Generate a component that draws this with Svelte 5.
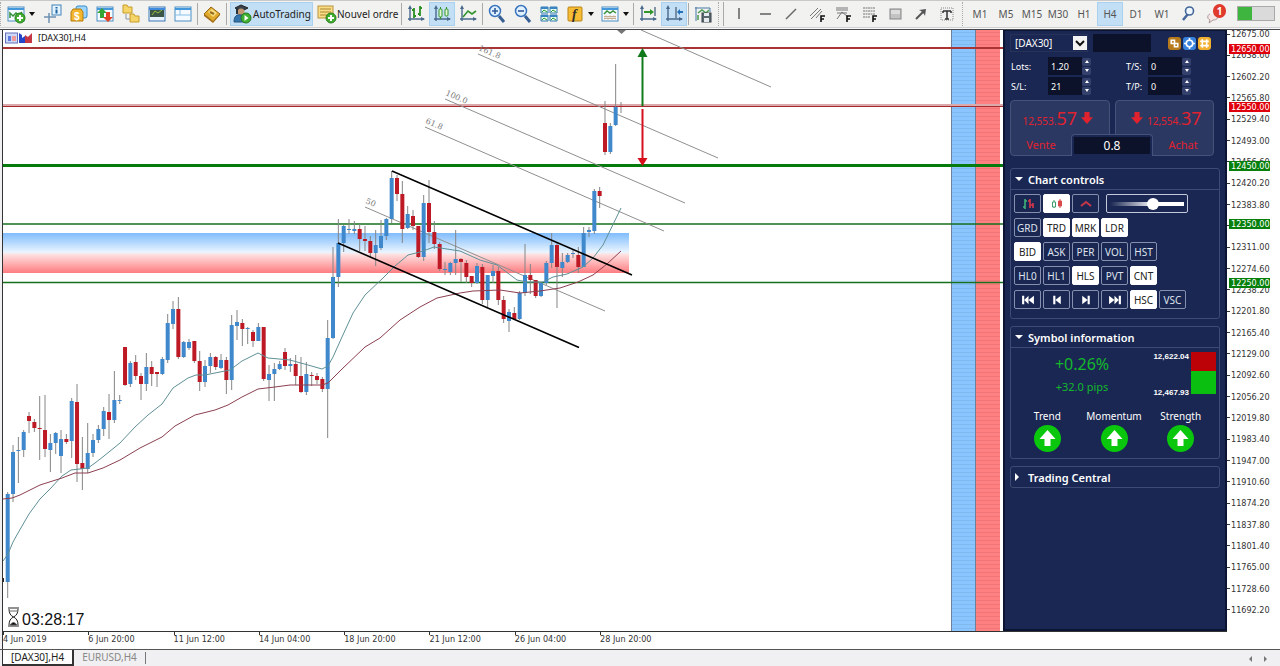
<script>
    let symbol = $state('[DAX30]')
    let lots = $state('1.20')
    let stopLoss = $state('21')
    let trailing = $state('0')
    let takeProfit = $state('0')
    let zoomLevel = $state(60)
    let timeframe = $state('H4')

    // x of the first candle and the distance between two candles
    const firstX = 7.7
    const stepX = 5.333

    // high, body top, body bottom, low, 1 = rising
    const candles = [
        [492,494,582,598,1],[445,452,494,502,1],[437,450,451,483,1],[430,432,450,457,1],[412,416,421,433,0],[419,422,428,432,0],
        [396,428,429,460,0],[395,430,449,457,0],[434,443,450,472,1],[432,433,443,454,1],[430,439,456,473,1],[434,439,442,444,0],
        [398,401,441,458,1],[384,402,464,482,0],[437,463,469,490,0],[423,453,469,473,1],[434,440,453,457,1],[425,429,440,443,1],
        [407,411,429,436,1],[394,412,420,439,0],[371,400,420,423,1],[395,400,401,404,1],[347,347,385,386,0],[361,363,384,387,1],
        [355,362,376,380,0],[373,376,384,400,0],[353,367,384,391,1],[361,367,374,386,0],[372,372,374,387,0],[357,359,374,375,1],
        [314,323,360,363,1],[301,309,324,329,1],[297,309,357,359,0],[341,342,357,358,1],[339,342,348,350,1],[341,341,361,363,0],
        [351,361,382,391,0],[360,366,382,387,1],[353,357,366,373,1],[356,357,367,370,0],[354,360,368,369,1],[357,360,380,394,0],
        [315,325,380,390,1],[310,322,326,340,1],[319,323,329,346,0],[327,328,329,344,1],[330,332,341,347,0],[323,327,341,341,1],
        [327,327,379,381,0],[365,374,380,401,1],[363,369,374,401,1],[361,364,369,370,1],[348,352,366,370,0],[358,364,366,372,1],
        [355,364,376,385,0],[357,376,392,393,0],[362,374,392,395,1],[372,375,376,386,0],[373,376,380,384,0],[377,379,389,392,0],
        [320,338,389,438,1],[247,277,338,339,1],[219,243,277,287,1],[225,226,243,252,1],[219,229,230,234,1],[221,229,231,234,1],
        [224,229,239,251,0],[226,239,241,251,0],[236,241,253,257,0],[230,245,253,266,1],[220,236,248,250,1],[218,219,236,240,1],
        [171,178,219,223,1],[175,178,194,201,0],[181,194,229,243,0],[206,214,228,229,1],[210,216,226,230,0],[226,226,257,258,0],
        [195,203,257,261,1],[180,203,232,243,0],[221,232,244,249,0],[242,244,269,271,0],[262,269,270,275,1],[262,263,272,275,1],
        [230,259,263,275,1],[258,259,262,282,0],[260,263,277,283,0],[276,276,283,287,0],[263,266,283,284,1],[264,267,300,304,0],
        [275,275,300,307,1],[265,271,276,283,1],[267,271,300,305,0],[296,300,319,323,0],[309,312,321,332,1],[307,313,319,320,0],
        [291,293,319,320,1],[244,275,293,296,1],[264,275,280,294,0],[280,280,296,298,0],[282,283,296,297,1],[261,263,283,285,1],
        [233,245,263,268,1],[243,245,267,308,0],[253,262,268,277,1],[253,255,262,263,1],[249,253,254,258,1],[247,255,267,273,0],
        [227,233,267,267,1],[227,230,232,237,1],[189,191,231,234,1],[187,191,196,208,0],[101,123,152,155,0],[123,126,152,154,1],
        [64,107,125,126,1],[102,106,107,113,0]
    ]

    const fastAverage = '3,561 8,554 13,542 18,533 29,514 40,499 50,489 62,476 71,470 88,468 95,463 104,456 120,443 135,427 148,415 162,404 173,388 188,378 196,375 205,375 215,373 230,370 242,361 258,353 268,358 290,360 308,365 322,369 328,366 333,357 342,337 353,313 365,295 383,278 395,266 408,255 420,252 434,247 460,251 480,260 497,265 517,280 527,282 543,282 553,277 567,274 583,267 593,258 603,245 621,208'
    const slowAverage = '3,499 12,498 20,495 40,485 62,478 75,473 88,473 103,468 120,460 140,448 162,437 175,426 195,415 215,410 228,405 242,397 258,389 275,387 290,385 322,385 328,383 342,369 365,347 380,338 400,320 420,307 437,298 460,293 473,291 500,290 520,293 540,291 560,288 578,282 593,275 607,264 621,251'

    const levels = [
        { y: 48, color: '#a93434', width: 2 },
        { y: 105, color: '#dba9ab', width: 2 },
        { y: 106.5, color: '#a32d31', width: 1 },
        { y: 165.5, color: '#057a0d', width: 3 },
        { y: 224, color: '#16701c', width: 1.5 },
        { y: 282.5, color: '#16701c', width: 1.5 }
    ]

    const fibs = [
        { x1: 641, y1: 30, x2: 771, y2: 87 },
        { x1: 478, y1: 54, x2: 718, y2: 158, label: '161.8' },
        { x1: 445, y1: 99, x2: 685, y2: 203, label: '100.0' },
        { x1: 425, y1: 127, x2: 664, y2: 231, label: '61.8' },
        { x1: 365, y1: 207, x2: 605, y2: 311, label: '50' }
    ]

    const topPrice = 12675
    const priceStep = 36.4
    const ticks = Array.from({ length: 28 }, (_, i) => (topPrice - i * priceStep).toFixed(2))
    const tags = [
        { price: 12650, color: '#e0000c' },
        { price: 12550, color: '#e0000c' },
        { price: 12450, color: '#06800b' },
        { price: 12350, color: '#06800b' },
        { price: 12250, color: '#06800b' }
    ]
    const tagTop = (price) => ((topPrice - price) / (priceStep * 27)) * 100

    const dates = ['4 Jun 2019', '6 Jun 20:00', '11 Jun 12:00', '14 Jun 04:00', '18 Jun 20:00', '21 Jun 12:00', '26 Jun 04:00', '28 Jun 20:00']
    const timeframes = ['M1', 'M5', 'M15', 'M30', 'H1', 'H4', 'D1', 'W1']

    let toggles = $state([
        [['GRD', false], ['TRD', true], ['MRK', true], ['LDR', true]],
        [['BID', true], ['ASK', false], ['PER', false], ['VOL', false], ['HST', false]],
        [['HL0', false], ['HL1', false], ['HLS', true], ['PVT', false], ['CNT', true]]
    ])
    let scroll = $state([['HSC', true], ['VSC', false]])

    const steppers = [
        { title: 'First', d: 'M1 1h2v8h-2zM7 1v8l-4-4zM12 1v8l-5-4z' },
        { title: 'Back', d: 'M3 1h2v8h-2zM10 1v8l-5-4z' },
        { title: 'Forward', d: 'M8 1h2v8h-2zM3 1v8l5-4z' },
        { title: 'Last', d: 'M10 1h2v8h-2zM1 1v8l5-4zM6 1v8l4-4z' }
    ]

    const axes = '<path d="M4 3v14M2 15h16" stroke="#49698c" stroke-width="1.4"/><path d="M4 1l-2 4h4zM19 15l-4-2v4z" fill="#49698c"/>'
    const plus = '<circle cx="14" cy="14" r="5" fill="#43ad31" stroke="#26801c"/><path d="M14 11v6M11 14h6" stroke="#fff" stroke-width="2"/>'
    const win = '<rect x="2" y="3" width="16" height="14" fill="#f4faff" stroke="#4c8fc4"/><path d="M2 4h16v2H2z" fill="#4597dc"/>'

    const icons = {
        newChart: win + '<path d="M4 14V9l3 3 3-3 3 2 3-3" stroke="#36923b" stroke-width="1.5"/>' + plus,
        crosshair: '<path d="M6 9v10M1 13h12" stroke="#6f91b3" stroke-width="1.5"/><rect x="9" y="1" width="9" height="10" fill="#e3f3ff" stroke="#4583b6"/><path d="M13.5 3v1.5M13.5 5.5v4" stroke="#1e649f" stroke-width="2"/>',
        market: '<rect x="7" y="2" width="11" height="12" rx="2" fill="#9cd6ff" stroke="#368ac8"/><path d="M2 8l2-3h8l2 3v9H2z" fill="#f3b62c" stroke="#b57b0c"/><text x="5" y="16" font-size="10" font-weight="700" fill="#fff" font-family="Liberation Sans, sans-serif">$</text>',
        arrows: win + '<path d="M7 4l5 5H9v5H5V9H2z" fill="#33a635"/><path d="M13 18l5-5h-3V8h-4v5H8z" fill="#e34324"/>',
        folders: '<path d="M2 1h4l1 2h4v6H2zM9 10h4l1 2h4v6H9z" fill="#f6d568" stroke="#c69c2b"/><path d="M5 10v5h4" stroke="#8a95a5"/>',
        terminal: '<rect x="2" y="3" width="16" height="14" fill="#e7f2fd" stroke="#3e79b3"/><path d="M2 4h16v2H2z" fill="#3f8ade"/><path d="M3 6h14v7H3z" fill="#3c5648"/><path d="M5 11l3-4 3 2 4-3" stroke="#98be39"/>',
        tester: win + '<path d="M2 11h16M7 6v5" stroke="#88bfe5"/>',
        editor: '<path d="M2 10l7-7 9 7-7 8z" fill="#e0ab2d" stroke="#956516"/><path d="M2 10v2l9 7 7-8v-1l-7 7z" fill="#a6701a"/><path d="M6 8l4-3 5 4-4 4z" fill="#f7dd83"/><path d="M8 8l4 2" stroke="#966a1b" stroke-width="2"/>',
        robot: '<path d="M3 4l6-3 7 3-6 3z" fill="#39424e" stroke="#222"/><circle cx="9" cy="8" r="3.5" fill="#c49972"/><path d="M2 18c0-6 3-8 7-7 4 0 6 3 6 7z" fill="#3575ad" stroke="#23557e"/><path d="M5 4v6" stroke="#28323d" stroke-width="2"/><circle cx="14" cy="14" r="5" fill="#40af32" stroke="#247a1e"/><path d="M12.5 11l4 3-4 3z" fill="#fff"/>',
        order: '<rect x="1" y="2" width="15" height="12" fill="#f9de87" stroke="#b8933c"/><path d="M3 5h11M3 8h11M3 11h8" stroke="#af8633"/>' + plus,
        bars: axes + '<path d="M8 4v10M8 6H6M8 12h2M14 2v10M14 4h2M14 10h-2" stroke="#299022" stroke-width="1.8"/>',
        candle: axes + '<rect x="7" y="5" width="3" height="8" rx="1" fill="#e5f7d5" stroke="#31952c"/><rect x="13" y="5" width="3" height="7" rx="1" fill="#e5f7d5" stroke="#31952c"/><path d="M8.5 3v2M14.5 3v2M8.5 13v2" stroke="#31952c"/>',
        line: axes + '<path d="M5 13l5-6 4 3 4-3" stroke="#31952c" stroke-width="1.6"/>',
        zoomIn: '<path d="M12 12l5 6" stroke="#385f93" stroke-width="3"/><circle cx="8" cy="7" r="5.5" fill="#e1f1ff" stroke="#3974bd" stroke-width="1.5"/><path d="M8 4v6M5 7h6" stroke="#315b98" stroke-width="1.6"/>',
        zoomOut: '<path d="M12 12l5 6" stroke="#385f93" stroke-width="3"/><circle cx="8" cy="7" r="5.5" fill="#e1f1ff" stroke="#3974bd" stroke-width="1.5"/><path d="M5 7h6" stroke="#315b98" stroke-width="1.6"/>',
        tile: '<path d="M2 3h7v6H2zM11 3h7v6h-7zM2 11h7v6H2zM11 11h7v6h-7z" fill="#eaffed" stroke="#3279b2"/><path d="M2 3h7v2H2zM11 3h7v2h-7zM2 11h7v2H2zM11 11h7v2h-7z" fill="#3a84c4"/><path d="M3 8l2-2 3 2M12 8l2-2 3 2M3 16l2-2 3 2M12 16l2-2 3 2" stroke="#279537"/>',
        indicator: '<rect x="3" y="3" width="14" height="14" rx="1" fill="#f6bd35" stroke="#b98314"/><text x="7" y="15" font-size="14" font-style="italic" font-weight="700" fill="#33302a" font-family="Liberation Serif, serif">f</text>',
        template: win + '<path d="M4 10l3-3 3 2 3-2 3 2" stroke="#39923b" stroke-width="1.5"/><path d="M4 13l2-1 2 1 2-1 2 1 2-1 2 1M4 15l2-1 2 1 2-1 2 1 2-1 2 1" stroke="#b89770"/>',
        scrollEnd: axes + '<path d="M17 3v9" stroke="#5c7489" stroke-width="1.5"/><path d="M6 8h7" stroke="#31952c" stroke-width="2"/><path d="M16 8l-4-3v6z" fill="#31952c"/>',
        shift: axes + '<path d="M12 3v11" stroke="#5c7489" stroke-width="1.5"/><path d="M19 8h-4" stroke="#2371ba" stroke-width="2"/><path d="M13 8l3-3v6z" fill="#2371ba"/>',
        save: '<path d="M3 3v14M2 4h15v4" stroke="#4778a5"/><path d="M5 9l4-3 4 3 3-3M5 11v5" stroke="#4a9b4e" stroke-width="1.5"/><rect x="9" y="9" width="9" height="9" fill="#5b6870" stroke="#3a4248"/><path d="M11 9h5v3h-5zM11 14h5v4h-5z" fill="#e4eaee"/>',
        vline: '<path d="M10 4v11" stroke="#555" stroke-width="1.4"/>',
        hline: '<path d="M5 10h11" stroke="#555" stroke-width="1.4"/>',
        trend: '<path d="M5 15L15 5" stroke="#666" stroke-width="1.4"/>',
        channel: '<path d="M3 12l8-8M4 15l10-10M9 14l6-7" stroke="#777"/><path d="M14 18v-6h4M14 15h3" stroke="#111" stroke-width="1.6"/>',
        fan: '<path d="M3 4h12M3 6h12M4 15l5-7 6 5M4 9h10" stroke="#777"/><path d="M14 18v-6h4M14 15h3" stroke="#111" stroke-width="1.6"/>',
        fibo: '<path d="M4 4h12M4 7h12M4 10h12M4 13h7" stroke="#777" stroke-dasharray="2 0.5"/><path d="M14 18v-6h4M14 15h3" stroke="#111" stroke-width="1.6"/>',
        rect: '<rect x="5" y="5" width="11" height="10" fill="#c3c3c3" stroke="#858585"/><path d="M6 6h9v4H6z" fill="#ddd"/>',
        pointer: '<path d="M5 15l7-7" stroke="#555" stroke-width="2"/><path d="M15 5l-7 1 2 1 3 3 1 2z" fill="#555"/>',
        text: '<rect x="4" y="4" width="12" height="12" stroke="#888" stroke-dasharray="1 1"/><path d="M6 7h8M6 7v2M14 7v2M10 7v8M8 15h4" stroke="#333" stroke-width="1.5"/>',
        search: '<path d="M5 16l5-6" stroke="#43669a" stroke-width="2.5"/><circle cx="11.5" cy="7" r="4" fill="#eef6ff" stroke="#43669a" stroke-width="1.6"/>'
    }

    const groups = [
        ['crosshair', 'market', 'arrows', 'folders', 'terminal', 'tester', '|', 'editor', '|'],
        ['bars', '*candle', 'line', '|', 'zoomIn', 'zoomOut', 'tile', 'indicator+', 'template+', '|', 'scrollEnd', '*shift', '|', 'save'],
        ['vline', 'hline', 'trend', 'channel', 'fan', 'fibo', 'rect', 'pointer', 'text']
    ]
</script>

{#snippet icon(name)}
    <svg class="icon" viewBox="0 0 20 20" fill="none">{@html icons[name]}</svg>
{/snippet}

{#snippet tools(list)}
    {#each list as item}
        {@const name = item.replace(/[*+]/, '')}
        {#if item === '|'}
            <span class="sep"></span>
        {:else}
            <button class="tool" class:active={item[0] === '*'} class:drop={item.endsWith('+')} title={name}>
                {@render icon(name)}
                {#if item.endsWith('+')}<span class="caret"></span>{/if}
            </button>
        {/if}
    {/each}
{/snippet}

{#snippet spinField(id, label, value, set)}
    <div class="field">
        <label for={id}>{label}</label>
        <input {id} {value} oninput={(e) => set(e.currentTarget.value)} />
        <span class="spin">
            <button aria-label="{label} up"><i class="up"></i></button>
            <button aria-label="{label} down"><i class="down"></i></button>
        </span>
    </div>
{/snippet}

<div class="terminal">
    <header class="toolbar">
        <span class="grip"></span>
        <button class="tool first" title="newChart">{@render icon('newChart')}<span class="caret"></span></button>
        {@render tools(groups[0])}
        <button class="wide auto active">{@render icon('robot')}AutoTrading</button>
        <button class="wide order">{@render icon('order')}Nouvel ordre</button>
        <span class="sep"></span>
        {@render tools(groups[1])}
        <span class="grip double"></span>
        {@render tools(groups[2])}
        <span class="grip"></span>
        {#each timeframes as tf}
            <button class="tool tf" class:active={tf === timeframe} onclick={() => (timeframe = tf)}>{tf}</button>
        {/each}
        <button class="tool" title="search">{@render icon('search')}</button>
        <button class="tool alerts" title="alerts">
            <svg class="icon" viewBox="0 0 20 20" fill="none">
                <path d="M4 10c-3 1-3 5 0 6l-1 3 4-3c4 0 5-2 5-4" fill="#f6e8e6" stroke="#a99" />
            </svg>
            <span class="badge">1</span>
        </button>
        <span class="battery"><span></span></span>
    </header>

    <main class="chart">
        <div class="plot">
            <svg class="canvas" viewBox="3 30 1000 601">
                <defs>
                    <linearGradient id="zone" x1="0" y1="0" x2="0" y2="1">
                        <stop offset="0" stop-color="#7fbcfc" />
                        <stop offset="0.48" stop-color="#eaf5ff" />
                        <stop offset="0.54" stop-color="#ffe0e0" />
                        <stop offset="1" stop-color="#fd7c80" />
                    </linearGradient>
                    <pattern id="blueBand" width="24" height="4" patternUnits="userSpaceOnUse">
                        <rect width="24" height="4" fill="#8ac5ff" />
                        <rect width="24" height="1" fill="#7fb9f0" />
                    </pattern>
                    <pattern id="redBand" width="24" height="4" patternUnits="userSpaceOnUse">
                        <rect width="24" height="4" fill="#ff8080" />
                        <rect width="24" height="1" fill="#ef7578" />
                    </pattern>
                </defs>

                <rect x="3" y="233" width="626" height="40" fill="url(#zone)" />
                <rect x="951" y="30" width="25" height="601" fill="url(#blueBand)" />
                <rect x="976" y="30" width="24" height="601" fill="url(#redBand)" />
                <path d="M951.5 30v601M975.5 30v601" stroke="#6d7f99" />

                {#each levels as level}
                    <line x1="3" x2="1003" y1={level.y} y2={level.y} stroke={level.color} stroke-width={level.width} />
                {/each}

                {#each fibs as fib}
                    <line x1={fib.x1} y1={fib.y1} x2={fib.x2} y2={fib.y2} stroke="#8f8f8f" />
                    {#if fib.label}
                        <text class="fib" transform="translate({fib.x1} {fib.y1 - 4}) rotate(23)">{fib.label}</text>
                    {/if}
                {/each}

                {#each candles as [high, top, bottom, low, rising], i}
                    {@const x = firstX + i * stepX}
                    <line x1={x} x2={x} y1={high} y2={low} stroke="#858585" />
                    <rect x={x - 2} y={top} width="4" height={Math.max(bottom - top, 1)} fill={rising ? '#3f88cc' : '#bd1a26'} />
                {/each}
                <rect x="3" y="578" width="1" height="4" fill="#222" />

                <polyline points={fastAverage} fill="none" stroke="#5f9096" />
                <polyline points={slowAverage} fill="none" stroke="#8c3f50" />

                <path d="M392 171L632 275M338 243L579 347.5" stroke="#000" stroke-width="1.6" />

                <path d="M642.5 106V55" stroke="#107a1a" stroke-width="2" />
                <path d="M642.5 48l-5 9h10z" fill="#107a1a" />
                <path d="M642.5 109v51" stroke="#d60f1c" stroke-width="2" />
                <path d="M642.5 166l-5-8h10z" fill="#d60f1c" />
                <path d="M617 30h9l-4.5 4z" fill="#777" />

                <path d="M8 608h11M8 626h11M9 609q0 6 4.5 8q4.5-2 4.5-8M9 625q0-6 4.5-8q4.5 2 4.5 8" fill="none" stroke="#222" />
                <path d="M10 625q3.5-5 7 0zM10 611h7" fill="#000" stroke="#666" />
                <text class="timer" x="22" y="625">03:28:17</text>
            </svg>
            <div class="caption">
                <svg viewBox="0 0 28 12" width="28" height="12">
                    <rect x="0.5" y="1" width="12" height="10" fill="#cad9fa" stroke="#6870b9" />
                    <path d="M3 4h3v5H3z" fill="#5d78dc" /><path d="M7 4h4v5H7z" fill="#f19a9a" />
                    <path d="M14 1l3 2v3l3-2v7h-6z" fill="#2545c8" /><path d="M20 3l3 2 4-4v10h-7z" fill="#c53745" />
                </svg>
                <span>[DAX30],H4</span>
            </div>
        </div>

        <aside class="panel">
            <div class="symbol">
                <div class="picker">
                    <select aria-label="Symbol" bind:value={symbol}>
                        <option>[DAX30]</option>
                        <option>EURUSD</option>
                    </select>
                    <svg viewBox="0 0 14 14" width="14" height="14"><path d="M3 5l4 4 4-4" fill="none" stroke="#111" stroke-width="2" /></svg>
                </div>
                <input class="filter" aria-label="Filter" />
                <button class="mini brown" aria-label="Link"><svg viewBox="0 0 12 12"><path d="M3 3h3v3H3zM6 6h3v3H6z" /></svg></button>
                <button class="mini blue" aria-label="Settings"><svg viewBox="0 0 12 12"><circle cx="6" cy="6" r="3" /><path d="M6 1v2M6 9v2M1 6h2M9 6h2" /></svg></button>
                <button class="mini amber" aria-label="Layout"><svg viewBox="0 0 12 12"><path d="M4 4h4v4H4zM4 2v2H2M8 2v2h2M4 10V8H2M8 10V8h2" /></svg></button>
            </div>

            <div class="fields">
                {@render spinField('lots', 'Lots:', lots, (v) => (lots = v))}
                {@render spinField('ts', 'T/S:', trailing, (v) => (trailing = v))}
                {@render spinField('sl', 'S/L:', stopLoss, (v) => (stopLoss = v))}
                {@render spinField('tp', 'T/P:', takeProfit, (v) => (takeProfit = v))}
            </div>

            <div class="deal">
                <button class="sell">
                    <span class="price">12,553.<b>57</b><svg viewBox="0 0 14 14"><path d="M4 0h6v6h4l-7 8-7-8h4z" /></svg></span>
                    <span class="side">Vente</span>
                </button>
                <button class="buy">
                    <span class="price"><svg viewBox="0 0 14 14"><path d="M4 0h6v6h4l-7 8-7-8h4z" /></svg>12,554.<b>37</b></span>
                    <span class="side">Achat</span>
                </button>
                <div class="spread"><output>0.8</output></div>
            </div>

            <section class="box controls">
                <h2><i class="open"></i>Chart controls</h2>
                <div class="rows">
                    <div class="row">
                        <button aria-label="Bars"><svg viewBox="0 0 14 12"><path d="M4 1v10M4 3h2M2 9h2" stroke="#3fb07a" stroke-width="1.6" /><path d="M9 1v9M9 7h3M7 3h2M12 5v5" stroke="#d8364a" stroke-width="1.6" /></svg></button>
                        <button class="on" aria-label="Candles"><svg viewBox="0 0 14 12"><path d="M4 2v8" stroke="#3f9d6b" /><path d="M2.5 4h3v5h-3z" fill="#fff" stroke="#3f9d6b" /><path d="M10 1v9M8.5 3h3v5h-3z" fill="#d94a4a" stroke="#d94a4a" /></svg></button>
                        <button aria-label="Line"><svg viewBox="0 0 14 12"><path d="M2 8l5-4 5 4" fill="none" stroke="#c8364a" stroke-width="2" /></svg></button>
                        <div class="slider"><input type="range" aria-label="Zoom" bind:value={zoomLevel} /></div>
                    </div>
                    {#each toggles as row}
                        <div class="row">
                            {#each row as item}
                                <button class:on={item[1]} onclick={() => (item[1] = !item[1])}>{item[0]}</button>
                            {/each}
                        </div>
                    {/each}
                    <div class="row">
                        {#each steppers as s}
                            <button aria-label={s.title}><svg viewBox="0 0 13 10"><path d={s.d} fill="#fff" /></svg></button>
                        {/each}
                        {#each scroll as item}
                            <button class:on={item[1]} onclick={() => (item[1] = !item[1])}>{item[0]}</button>
                        {/each}
                    </div>
                </div>
            </section>

            <section class="box">
                <h2><i class="open"></i>Symbol information</h2>
                <div class="stats">
                    <div class="change">
                        <strong>+0.26%</strong>
                        <span>+32.0 pips</span>
                    </div>
                    <div class="range"><span>12,622.04</span><span>12,467.93</span></div>
                    <div class="bar"><span class="above"></span><span class="below"></span></div>
                </div>
                <div class="signals">
                    {#each ['Trend', 'Momentum', 'Strength'] as name}
                        <div class="signal">
                            <span>{name}</span>
                            <svg viewBox="0 0 27 27"><circle cx="13.5" cy="13.5" r="13.5" fill="#0ac70e" /><path d="M13.5 5l8 9h-5v7h-6v-7h-5z" fill="#fff" /></svg>
                        </div>
                    {/each}
                </div>
            </section>

            <section class="box">
                <h2><i class="closed"></i>Trading Central</h2>
            </section>
        </aside>

        <div class="prices">
            <div class="scale">
                {#each ticks as tick}
                    <span class="tick">{tick}</span>
                {/each}
                {#each tags as tag}
                    <span class="tag" style="top: {tagTop(tag.price)}%; background: {tag.color}">{tag.price.toFixed(2)}</span>
                {/each}
            </div>
        </div>

        <div class="times">
            {#each dates as date}
                <span>{date}</span>
            {/each}
        </div>
    </main>

    <nav class="tabs">
        <a class="current" href="#dax">[DAX30],H4</a>
        <a href="#eurusd">EURUSD,H4</a>
        <span class="divider"></span>
        <button class="prev" aria-label="Previous tab"><i></i></button>
        <button class="next" aria-label="Next tab"><i></i></button>
    </nav>
</div>

<style>
    :global(body) {
        margin: 0;
        background: #f0eff1;
    }
    .terminal {
        display: flex;
        flex-direction: column;
        min-width: 1100px;
        min-height: 100vh;
        font-family: "Noto Sans", "Open Sans", sans-serif;
        font-size: 10px;
        color: #333;
    }
    button, input, select {
        box-sizing: border-box;
        margin: 0;
        padding: 0;
        border: 0;
        font: inherit;
        color: inherit;
        background: none;
        outline: none;
    }

    /* toolbar */
    .toolbar {
        display: flex;
        align-items: center;
        box-sizing: border-box;
        height: 30px;
        padding-bottom: 3px;
        background: linear-gradient(#c9c9c9 1px, #f2f2f1 1px, #f1f1f0 27px, #a8a8a8 27px, #f8f8f8 28px, #f8f8f8 29px, #44484d 29px);
    }
    .grip {
        width: 3px;
        height: 24px;
        margin: 0 2px;
        border-left: 1px dotted #aaa;
        box-sizing: border-box;
        flex: none;
    }
    .grip.double {
        width: 6px;
        border-right: 1px solid #aaa;
    }
    .grip:first-child {
        margin: 0;
    }
    .sep {
        width: 1px;
        height: 22px;
        margin: 0 1px;
        background: #aaa;
        flex: none;
    }
    .tool {
        display: flex;
        align-items: center;
        justify-content: center;
        gap: 3px;
        height: 24px;
        min-width: 26px;
        flex: none;
        white-space: nowrap;
    }
    .tool.first {
        padding: 0 2px 0 3px;
    }
    .tool.drop {
        padding-left: 3px;
    }
    .tool.active, .wide.active {
        background: #c2dff5;
        box-shadow: inset 0 0 0 1px #a9d0ee;
    }
    .icon {
        width: 20px;
        height: 20px;
        display: block;
        flex: none;
    }
    .caret {
        border: 3px solid transparent;
        border-top: 4px solid #111;
        border-bottom: 0;
        margin-right: 3px;
    }
    .wide {
        display: flex;
        align-items: center;
        gap: 1px;
        height: 24px;
        font-size: 10px;
        color: #222;
        white-space: nowrap;
        flex: none;
    }
    .wide.auto {
        width: 83px;
        padding-left: 2px;
        margin-left: 2px;
    }
    .wide.order {
        width: 87px;
        padding-left: 4px;
        gap: 0;
    }
    .tf {
        color: #555;
    }
    .alerts {
        position: relative;
        margin-left: 2px;
    }
    .badge {
        position: absolute;
        top: 2px;
        right: 3px;
        width: 13px;
        height: 14px;
        border-radius: 7px;
        background: #df3a2c;
        color: #fff;
        font-size: 10px;
        font-weight: 700;
        line-height: 14px;
    }
    .battery {
        box-sizing: border-box;
        width: 38px;
        height: 15px;
        margin-left: auto;
        margin-right: 5px;
        border: 1px solid #aaa;
        background: #dadada;
    }
    .battery span {
        display: block;
        width: 40%;
        height: 100%;
        background: #3db53e;
    }

    /* chart */
    .chart {
        display: grid;
        grid-template-columns: 1fr 224px 53px;
        grid-template-rows: auto 18px;
        flex: 1;
        margin-left: 2px;
        border-left: 1px solid #333;
        background: #fff;
        align-content: start;
    }
    .plot {
        position: relative;
    }
    .canvas {
        display: block;
        width: 100%;
        height: auto;
    }
    .caption {
        position: absolute;
        top: 2px;
        left: 2px;
        display: flex;
        align-items: center;
        gap: 5px;
        font-size: 9px;
        line-height: 12px;
        color: #111;
    }
    .fib {
        font: 8px "DejaVu Serif", serif;
        fill: #777;
    }
    .timer {
        font: 16px "Liberation Sans", sans-serif;
        fill: #111;
    }
    .prices {
        padding: 4px 0 21px;
    }
    .scale {
        position: relative;
        display: flex;
        flex-direction: column;
        justify-content: space-between;
        height: 100%;
    }
    .tick, .tag {
        font: 9px/10px "DejaVu Sans Condensed", "DejaVu Sans", sans-serif;
    }
    .tick {
        display: flex;
        align-items: center;
        gap: 1px;
        height: 0;
    }
    .tick::before {
        content: "";
        width: 3px;
        height: 1px;
        background: #333;
    }
    .tag {
        position: absolute;
        left: 2px;
        width: 41px;
        padding-left: 2px;
        box-sizing: border-box;
        transform: translateY(-50%);
        color: #fff;
    }
    .times {
        grid-column: 1 / 2;
        display: flex;
        border-top: 1px solid #333;
        margin-right: -224px;
        padding-right: 224px;
        font: 9px/14px "DejaVu Sans Condensed", "DejaVu Sans", sans-serif;
        white-space: nowrap;
    }
    .times span {
        width: 8.53%;
        background: linear-gradient(#333, #333) 0 0 / 1px 3px no-repeat;
    }

    /* trading panel */
    .panel {
        box-sizing: border-box;
        padding: 3px 5px 0;
        border: solid #0c1434;
        border-width: 1px 2px 2px;
        background: #1a2752;
        color: #fff;
    }
    .symbol {
        display: flex;
        align-items: center;
        gap: 2px;
        height: 18px;
    }
    .picker {
        position: relative;
        width: 78px;
        height: 18px;
        box-sizing: border-box;
        border: 1px solid #263258;
        margin-right: 3px;
    }
    .picker select {
        appearance: none;
        width: 100%;
        height: 16px;
        padding-left: 4px;
        font-size: 10px;
        line-height: 16px;
    }
    .picker option {
        color: #111;
    }
    .picker svg {
        position: absolute;
        top: 1px;
        right: 0;
        background: #f3f3f3;
        pointer-events: none;
    }
    .filter {
        width: 58px;
        height: 18px;
        margin-right: 15px;
        background: #0b1229;
    }
    .mini {
        width: 13px;
        height: 13px;
        border-radius: 3px;
    }
    .mini svg {
        display: block;
        fill: none;
        stroke: #fff;
        stroke-width: 1.5;
    }
    .brown { background: #b77a1d; }
    .blue { background: #3882dd; }
    .amber { background: #f1b02f; }
    .fields {
        display: grid;
        grid-template-columns: 115px 1fr;
        gap: 2px 0;
        margin-top: 5px;
        font-size: 9px;
    }
    .field {
        display: flex;
        align-items: center;
    }
    .field label {
        width: 38px;
        padding-left: 1px;
        box-sizing: border-box;
        white-space: nowrap;
    }
    .field:nth-child(even) label {
        width: 23px;
    }
    .field input {
        width: 34px;
        height: 18px;
        padding-left: 3px;
        background: #0b1229;
    }
    .spin {
        display: grid;
        gap: 1px;
    }
    .spin button {
        display: flex;
        align-items: center;
        justify-content: center;
        width: 9px;
        height: 8px;
        border-radius: 2px;
        background: #34416d;
    }
    .spin i {
        border: 2px solid transparent;
    }
    .spin .up {
        border-bottom: 3px solid #fff;
        border-top: 0;
    }
    .spin .down {
        border-top: 3px solid #fff;
        border-bottom: 0;
    }

    .deal {
        position: relative;
        display: flex;
        gap: 5px;
        width: 204px;
        margin-top: 5px;
        color: #e0222f;
    }
    .sell, .buy {
        display: flex;
        flex-direction: column;
        flex: 1;
        height: 56px;
        border: 1px solid #46527a;
        border-radius: 4px;
        background: #2b3862;
    }
    .price {
        display: flex;
        align-items: baseline;
        justify-content: center;
        align-self: center;
        height: 34px;
        font-size: 10px;
        line-height: 34px;
    }
    .price b {
        font-size: 18px;
        font-weight: 400;
    }
    .price svg {
        width: 12px;
        height: 14px;
        margin: 0 4px;
        fill: #e0222f;
        align-self: center;
    }
    .side {
        width: 60px;
        font-size: 11px;
        line-height: 20px;
        text-align: center;
    }
    .buy .side {
        align-self: flex-end;
    }
    .spread {
        position: absolute;
        left: 50%;
        bottom: 0;
        width: 76px;
        padding: 2px;
        margin-left: -41px;
        border: solid #46527a;
        border-width: 1px 1px 0;
        border-radius: 4px 4px 0 0;
        background: #1a2752;
    }
    .spread output {
        display: block;
        height: 17px;
        background: #0b1229;
        color: #fff;
        font: 12px/17px "Noto Sans", sans-serif;
        text-align: center;
    }

    .box {
        margin-top: 7px;
        border: 1px solid #3d4a74;
        border-radius: 3px;
    }
    .controls {
        margin-top: 12px;
    }
    h2 {
        display: flex;
        align-items: center;
        gap: 5px;
        height: 20px;
        margin: 0;
        padding-left: 4px;
        font-size: 11px;
        font-weight: 600;
    }
    h2 i {
        box-sizing: border-box;
        width: 8px;
        height: 8px;
        border: 4px solid transparent;
    }
    h2 .open {
        height: 4px;
        border-width: 4px 4px 0;
        border-top-color: #fff;
    }
    h2 .closed {
        border-left-color: #fff;
    }
    .rows {
        display: flex;
        flex-direction: column;
        gap: 5px;
        padding: 4px 3px 9px;
        border-top: 1px solid #3d4a74;
    }
    .row {
        display: flex;
        gap: 2px;
    }
    .row button {
        display: flex;
        align-items: center;
        justify-content: center;
        width: 27px;
        height: 19px;
        border: 1px solid #8690ae;
        border-radius: 2px;
        color: #dfe3ee;
        font-size: 10px;
    }
    .row button.on {
        background: #fff;
        border-color: #fff;
        color: #222;
    }
    .row svg {
        width: 14px;
        height: 12px;
        fill: none;
    }
    .slider {
        display: flex;
        align-items: center;
        box-sizing: border-box;
        width: 82px;
        height: 19px;
        padding: 0 3px;
        margin-left: 5px;
        border: 1px solid #c4cadb;
        border-radius: 2px;
    }
    .slider input {
        appearance: none;
        width: 100%;
        height: 4px;
        background: linear-gradient(90deg, #1a2752, #fff 60%);
    }
    .slider input::-webkit-slider-thumb {
        appearance: none;
        width: 12px;
        height: 12px;
        border-radius: 50%;
        background: #fff;
    }

    .stats {
        display: flex;
        padding: 4px 3px 0 0;
        border-top: 1px solid #3d4a74;
    }
    .change {
        display: flex;
        flex-direction: column;
        align-items: center;
        width: 142px;
        color: #14b82c;
    }
    .change strong {
        font-size: 16px;
        line-height: 24px;
        font-weight: 400;
    }
    .change span {
        font-size: 11px;
        line-height: 22px;
    }
    .range {
        display: flex;
        flex-direction: column;
        justify-content: space-between;
        align-items: flex-end;
        flex: 1;
        margin-right: 2px;
        font: 700 8px/10px "Liberation Sans", sans-serif;
    }
    .bar {
        display: flex;
        flex-direction: column;
        width: 25px;
        height: 42px;
    }
    .above {
        height: 45%;
        background: #bc0207;
    }
    .below {
        flex: 1;
        background: #0abf10;
    }
    .signals {
        display: flex;
        padding: 10px 5px 6px 3px;
    }
    .signal {
        display: flex;
        flex: 1;
        flex-direction: column;
        align-items: center;
        gap: 1px;
        font-size: 10px;
        line-height: 16px;
    }
    .signal svg {
        width: 27px;
        height: 27px;
    }

    /* tabs */
    .tabs {
        display: flex;
        align-items: center;
        height: 17px;
        padding: 0 4px 0 2px;
        box-sizing: border-box;
        border-top: 1px solid #555;
        background: #f0eff1;
    }
    .tabs a {
        box-sizing: border-box;
        height: 16px;
        padding: 0 8px;
        font-size: 10px;
        line-height: 15px;
        color: #888;
        text-decoration: none;
    }
    .tabs .current {
        border: solid #333;
        border-width: 0 2px 2px 1px;
        background: #fff;
        color: #222;
    }
    .divider {
        width: 1px;
        height: 12px;
        background: #777;
    }
    .tabs button {
        width: 18px;
        height: 15px;
    }
    .tabs .prev {
        margin-left: auto;
    }
    .tabs i {
        display: inline-block;
        border: 3px solid transparent;
    }
    .prev i { border-right-color: #777; }
    .next i { border-left-color: #777; }
</style>
